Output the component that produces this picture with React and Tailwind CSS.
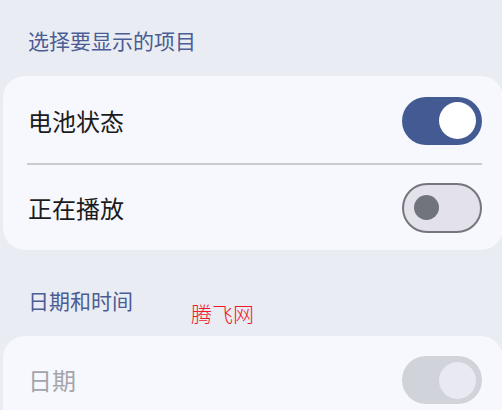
export default function App() {
  const font = { fontFamily: '"Noto Sans CJK SC", "Noto Sans", sans-serif' };
  return (
    <div className="relative w-[502px] h-[410px] overflow-hidden bg-[#eaecf3]" style={font}>
      <div className="pl-[28px] pt-[26px] pb-[22px] text-[21px] leading-[28px] text-[#4a5d94]">选择要显示的项目</div>
      <div className="ml-[3px] w-[500px] rounded-[22px] bg-[#f7f8fd]">
        <div className="flex h-[87px] items-center justify-between pl-[25px] pr-[21px] pt-[2px]">
          <span className="text-[24px] text-[#1c1c20]">电池状态</span>
          <div className="flex h-[48px] w-[80px] items-center justify-end rounded-full bg-[#435b92] pr-[6px]">
            <div className="h-[37px] w-[37px] rounded-full bg-white" />
          </div>
        </div>
        <div className="ml-[24px] mr-[21px] h-[2px] bg-[#cbcbcf]" />
        <div className="flex h-[85px] items-center justify-between pl-[25px] pr-[21px]">
          <span className="text-[24px] text-[#1c1c20]">正在播放</span>
          <div className="flex h-[50px] w-[80px] items-center rounded-full border-[2.5px] border-[#74767f] bg-[#e3e2ea] pl-[10px]">
            <div className="h-[25px] w-[25px] rounded-full bg-[#71737d]" />
          </div>
        </div>
      </div>
      <div className="pl-[28px] pt-[36px] pb-[22px] text-[21px] leading-[28px] text-[#4a5d94]">日期和时间</div>
      <div className="ml-[3px] w-[500px] h-[100px] rounded-[22px] bg-[#f7f8fd]">
        <div className="flex h-[88px] items-center justify-between pl-[25px] pr-[21px]">
          <span className="text-[24px] text-[#a4a5aa]">日期</span>
          <div className="flex h-[48px] w-[80px] items-center justify-end rounded-full bg-[#d1d3da] pr-[6px]">
            <div className="h-[37px] w-[37px] rounded-full bg-[#e9eaf1]" />
          </div>
        </div>
      </div>
      <div className="absolute left-[191px] top-[299px] text-[21px] leading-[28px] font-light text-[#f0182a]">腾飞网</div>
    </div>
  );
}
